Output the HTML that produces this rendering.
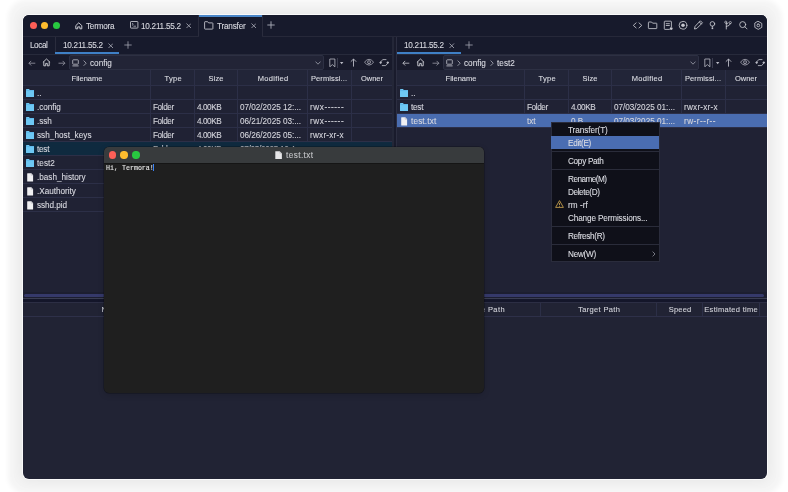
<!DOCTYPE html><html><head><meta charset="utf-8"><style>
html,body{margin:0;padding:0;}
body{width:788px;height:492px;background:#fff;position:relative;overflow:hidden;font-family:"Liberation Sans",sans-serif;}
.a{position:absolute;}
.t{position:absolute;white-space:pre;line-height:14px;height:14px;will-change:transform;-webkit-text-stroke:0.1px currentColor;}
</style></head><body>
<div class="a" style="left:23px;top:15px;width:744px;height:463.8px;border-radius:6px;background:#212334;box-shadow:0 0 0 0.7px #fff,0 0 5px 15px rgba(0,0,0,0.045),0 0 12px 2px rgba(0,0,0,0.06);"></div>
<div class="a" style="left:23px;top:15px;width:744px;height:463.8px;border-radius:6px;overflow:hidden;"><div class="a" style="left:-23px;top:-15px;width:788px;height:492px;">
<div class="a" style="left:23px;top:15px;width:744px;height:21px;background:#171a2c;"></div>
<div class="a" style="left:23px;top:36px;width:744px;height:1px;background:#262839;"></div>
<div class="a" style="left:29.75px;top:21.75px;width:7.2px;height:7.2px;border-radius:50%;background:#fe5f57;"></div>
<div class="a" style="left:41.15px;top:21.75px;width:7.2px;height:7.2px;border-radius:50%;background:#febc2e;"></div>
<div class="a" style="left:52.85px;top:21.75px;width:7.2px;height:7.2px;border-radius:50%;background:#28c840;"></div>
<svg class="a" style="left:74.6px;top:22px;" width="8" height="8" viewBox="0 0 8 8" fill="none"><path d="M0.8 3.6 L3.8 0.8 L6.8 3.6 V6.8 H4.9 V4.9 H2.7 V6.8 H0.8 Z" stroke="#c9cad2" stroke-width="1" stroke-linejoin="round"/></svg>
<div class="t" style="left:86px;top:20.1px;font-size:8.2px;color:#d8d9e0;letter-spacing:-0.245px;">Termora</div>
<svg class="a" style="left:129.6px;top:21.4px;" width="9" height="8" viewBox="0 0 9 8" fill="none"><rect x="0.5" y="0.5" width="7.4" height="6.6" rx="0.6" stroke="#c9cad2" stroke-width="0.85"/><path d="M2 2.2 L3.3 3.3 L2 4.4" stroke="#c9cad2" stroke-width="0.7"/><path d="M3.4 5.2 H6" stroke="#c9cad2" stroke-width="0.7"/></svg>
<div class="t" style="left:141px;top:20.1px;font-size:8.2px;color:#d8d9e0;letter-spacing:-0.259px;">10.211.55.2</div>
<svg class="a" style="left:185.8px;top:22.6px;" width="5.5" height="5.5" viewBox="0 0 5.5 5.5" fill="none"><path d="M0.5 0.5 L5.0 5.0 M5.0 0.5 L0.5 5.0" stroke="#aeb0bb" stroke-width="0.8"/></svg>
<div class="a" style="left:198px;top:15px;width:0.8px;height:21px;background:#2a2c3d;"></div>
<div class="a" style="left:198.8px;top:15px;width:63.4px;height:22px;background:#171a2c;"></div>
<div class="a" style="left:198.8px;top:15px;width:63.4px;height:1.6px;background:#4a86c8;"></div>
<div class="a" style="left:262.2px;top:15px;width:0.8px;height:21px;background:#2a2c3d;"></div>
<svg class="a" style="left:204.4px;top:21.2px;" width="10" height="9" viewBox="0 0 10 9" fill="none"><path d="M0.6 1.2 Q0.6 0.7 1.1 0.7 H3.6 L4.6 1.9 H8.4 Q8.9 1.9 8.9 2.4 V7.6 Q8.9 8.1 8.4 8.1 H1.1 Q0.6 8.1 0.6 7.6 Z" stroke="#c9cad2" stroke-width="0.85" stroke-linejoin="round"/></svg>
<div class="t" style="left:217px;top:20.1px;font-size:8.2px;color:#d8d9e0;letter-spacing:-0.207px;">Transfer</div>
<svg class="a" style="left:250.9px;top:22.6px;" width="5.5" height="5.5" viewBox="0 0 5.5 5.5" fill="none"><path d="M0.5 0.5 L5.0 5.0 M5.0 0.5 L0.5 5.0" stroke="#aeb0bb" stroke-width="0.8"/></svg>
<svg class="a" style="left:266.9px;top:20.9px;" width="8" height="8" viewBox="0 0 8 8" fill="none"><path d="M4 0.3 V7.7 M0.3 4 H7.7" stroke="#aeb0bb" stroke-width="0.9"/></svg>
<svg class="a" style="left:625px;top:15px" width="145" height="21" viewBox="625 15 145 21"><g stroke="#c6c7cf" stroke-width="0.85" fill="none" stroke-linecap="round" stroke-linejoin="round">
<path d="M636.1 22.9 L633.3 25.4 L636.1 27.9 M639 22.9 L641.8 25.4 L639 27.9"/>
<path d="M648.4 22.4 Q648.4 22 648.8 22 H651.6 L652.6 23.2 H656.4 Q656.8 23.2 656.8 23.6 V28.2 Q656.8 28.6 656.4 28.6 H648.8 Q648.4 28.6 648.4 28.2 Z"/>
<path d="M671.4 26.6 V21.8 Q671.4 21.2 670.8 21.2 H664.9 Q664.3 21.2 664.3 21.8 V28.8 Q664.3 29.4 664.9 29.4 H669.4"/>
<path d="M666.2 23.7 H669.4 M666.2 25.5 H669.4"/>
<circle cx="683" cy="25.3" r="3.9"/>
<g transform="translate(698.3 25.2) rotate(45)"><path d="M-1.25 -4.6 H1.25 V3.4 L0 5.4 L-1.25 3.4 Z M-1.25 -3 H1.25"/></g>
<circle cx="712.4" cy="23.9" r="2.3"/>
<path d="M712.4 26.2 V27.3"/>
<path d="M726.3 29 V22.6 M726.3 26.6 Q729.8 26 730.6 23.4 M726.3 23.8 Q727.6 24.6 728.2 23"/>
<circle cx="742.7" cy="24.6" r="3"/>
<path d="M744.9 26.8 L747 28.9"/>
<path d="M758.3 21.4 L761.8 23.4 V27.4 L758.3 29.4 L754.8 27.4 V23.4 Z"/>
<rect x="757" y="24.1" width="2.6" height="2.6" rx="1"/>
</g>
<circle cx="683" cy="25.3" r="1.75" fill="#c6c7cf"/>
<circle cx="671.2" cy="28.6" r="1.4" fill="#c6c7cf"/>
<rect x="711.6" y="27.6" width="1.6" height="1.5" fill="#c6c7cf"/>
<circle cx="725.8" cy="22.2" r="1.1" stroke="#c6c7cf" stroke-width="0.7" fill="none"/>
<circle cx="730.3" cy="22.6" r="1.1" stroke="#c6c7cf" stroke-width="0.7" fill="none"/>
</svg>
<div class="a" style="left:23px;top:37px;width:370px;height:17px;background:#171a2c;"></div>
<div class="a" style="left:23px;top:54px;width:370px;height:0.8px;background:#272a3b;"></div>
<div class="t" style="left:30px;top:39.2px;font-size:8.2px;color:#d8d9e0;letter-spacing:-0.439px;">Local</div>
<div class="a" style="left:55.3px;top:37px;width:0.8px;height:17px;background:#2a2c3d;"></div>
<div class="a" style="left:55.3px;top:52.3px;width:64px;height:1.7px;background:#3f80c6;"></div>
<div class="t" style="left:62.599999999999994px;top:39.2px;font-size:8.2px;color:#d8d9e0;letter-spacing:-0.259px;">10.211.55.2</div>
<svg class="a" style="left:107.5px;top:42.6px;" width="5.5" height="5.5" viewBox="0 0 5.5 5.5" fill="none"><path d="M0.5 0.5 L5.0 5.0 M5.0 0.5 L0.5 5.0" stroke="#aeb0bb" stroke-width="0.8"/></svg>
<svg class="a" style="left:123.6px;top:40.6px;" width="8" height="8" viewBox="0 0 8 8" fill="none"><path d="M4 0.3 V7.7 M0.3 4 H7.7" stroke="#a4a6b2" stroke-width="0.8"/></svg>
<div class="a" style="left:23px;top:55px;width:370px;height:15px;background:#181a2b;"></div>
<svg class="a" style="left:27.5px;top:59px;" width="8" height="8" viewBox="0 0 8 8" fill="none"><path d="M7.3 4.2 H0.9 M3.2 1.9 L0.9 4.2 L3.2 6.5" stroke="#9a9ca8" stroke-width="0.8"/></svg>
<svg class="a" style="left:42.3px;top:58.1px;" width="9" height="8.5" viewBox="0 0 9 8.5" fill="none"><path d="M0.9 4.4 L4.5 1 L8.1 4.4 M1.8 3.6 V7.8 H3.7 V5.4 H5.3 V7.8 H7.2 V3.6" stroke="#c9cad2" stroke-width="0.95" stroke-linejoin="round"/></svg>
<svg class="a" style="left:57.6px;top:59px;" width="8" height="8" viewBox="0 0 8 8" fill="none"><path d="M0.5 4.2 H6.9 M4.6 1.9 L6.9 4.2 L4.6 6.5" stroke="#9a9ca8" stroke-width="0.8"/></svg>
<div class="a" style="left:69.1px;top:54.9px;width:254.70000000000002px;height:15px;box-sizing:border-box;border:0.8px solid #2d3043;border-radius:2px;background:#222436;"></div>
<svg class="a" style="left:72.1px;top:58.8px;" width="8" height="8" viewBox="0 0 8 8" fill="none"><rect x="0.7" y="0.8" width="5.6" height="4.4" rx="0.6" stroke="#b9bac4" stroke-width="0.85"/><path d="M0.4 6.9 H6.6" stroke="#b9bac4" stroke-width="0.9"/></svg>
<svg class="a" style="left:82.6px;top:59.5px;" width="4" height="6.5" viewBox="0 0 4 6.5" fill="none"><path d="M0.6 0.6 L3.2 3.2 L0.6 5.8" stroke="#aeb0bb" stroke-width="0.8"/></svg>
<div class="t" style="left:89.8px;top:57.0px;font-size:8.2px;color:#dadbe2;letter-spacing:0.001px;">config</div>
<svg class="a" style="left:314.6px;top:60.8px;" width="6" height="4" viewBox="0 0 6 4" fill="none"><path d="M0.5 0.6 L3 3.2 L5.5 0.6" stroke="#9a9ca8" stroke-width="0.85"/></svg>
<svg class="a" style="left:328.6px;top:57.8px;" width="7" height="9" viewBox="0 0 7 9" fill="none"><path d="M0.8 1 H5.9 V8.8 L3.35 6.6 L0.8 8.8 Z" stroke="#b9bac4" stroke-width="0.8" stroke-linejoin="round"/></svg>
<div class="a" style="left:337.2px;top:57.5px;width:0.7px;height:10px;background:#3a3c4e;"></div>
<svg class="a" style="left:340.40000000000003px;top:61.6px;" width="4" height="3" viewBox="0 0 4 3" fill="none"><path d="M0 0 H3.4 L1.7 2.2 Z" fill="#b9bac4"/></svg>
<svg class="a" style="left:349.6px;top:57.8px;" width="7" height="9" viewBox="0 0 7 9" fill="none"><path d="M3.5 8.6 V1 M0.8 3.7 L3.5 1 L6.2 3.7" stroke="#b9bac4" stroke-width="0.9"/></svg>
<svg class="a" style="left:364.3px;top:58.3px;" width="10" height="9" viewBox="0 0 10 9" fill="none"><path d="M0.5 4.2 Q5.05 -1.6 9.6 4.2 Q5.05 10 0.5 4.2 Z" stroke="#b9bac4" stroke-width="0.75"/><circle cx="5.05" cy="4.2" r="1.5" stroke="#b9bac4" stroke-width="0.75"/><circle cx="5.05" cy="4.2" r="0.35" fill="#b9bac4"/></svg>
<svg class="a" style="left:379.3px;top:57.8px;" width="11" height="9" viewBox="0 0 11 9" fill="none"><path d="M7.4 1.6 H3.7 L1.7 4 M2.9 7.6 H6.7 L8.7 5.2" stroke="#b9bac4" stroke-width="0.85" stroke-linejoin="round"/><path d="M0.2 4.6 L1.6 3.2 L3.1 4.7 L1.6 6 Z M10.2 4.6 L8.8 3.2 L7.3 4.7 L8.8 6 Z" fill="#b9bac4"/></svg>
<div class="a" style="left:23px;top:70px;width:370px;height:15px;background:#222538;"></div>
<div class="t" style="left:-13.150000000000006px;width:200px;text-align:center;top:72.3px;font-size:7.5px;color:#dddee4;letter-spacing:0.004px;text-indent:0.004px;">Filename</div>
<div class="t" style="left:72.65px;width:200px;text-align:center;top:72.3px;font-size:7.5px;color:#dddee4;letter-spacing:0.304px;text-indent:0.304px;">Type</div>
<div class="t" style="left:116.1px;width:200px;text-align:center;top:72.3px;font-size:7.5px;color:#dddee4;letter-spacing:0.127px;text-indent:0.127px;">Size</div>
<div class="t" style="left:172.55px;width:200px;text-align:center;top:72.3px;font-size:7.5px;color:#dddee4;letter-spacing:0.289px;text-indent:0.289px;">Modified</div>
<div class="t" style="left:229.39999999999998px;width:200px;text-align:center;top:72.3px;font-size:7.5px;color:#dddee4;letter-spacing:0.108px;text-indent:0.108px;">Permissi...</div>
<div class="t" style="left:272.15px;width:200px;text-align:center;top:72.3px;font-size:7.5px;color:#dddee4;letter-spacing:-0.073px;text-indent:-0.073px;">Owner</div>
<div class="a" style="left:23px;top:85px;width:370px;height:208px;background:#202234;"></div>
<div class="a" style="left:23px;top:84.6px;width:370px;height:0.8px;background:#2c2f47;"></div>
<div class="a" style="left:23px;top:98.6px;width:370px;height:0.8px;background:#2c2f47;"></div>
<div class="a" style="left:23px;top:112.6px;width:370px;height:0.8px;background:#2c2f47;"></div>
<div class="a" style="left:23px;top:126.6px;width:370px;height:0.8px;background:#2c2f47;"></div>
<div class="a" style="left:23px;top:140.6px;width:370px;height:0.8px;background:#2c2f47;"></div>
<div class="a" style="left:23px;top:154.6px;width:370px;height:0.8px;background:#2c2f47;"></div>
<div class="a" style="left:23px;top:168.6px;width:370px;height:0.8px;background:#2c2f47;"></div>
<div class="a" style="left:23px;top:182.6px;width:370px;height:0.8px;background:#2c2f47;"></div>
<div class="a" style="left:23px;top:196.6px;width:370px;height:0.8px;background:#2c2f47;"></div>
<div class="a" style="left:23px;top:210.6px;width:370px;height:0.8px;background:#2c2f47;"></div>
<div class="a" style="left:150.29999999999998px;top:70px;width:0.8px;height:15px;background:#2c2f47;"></div>
<div class="a" style="left:150.29999999999998px;top:85px;width:0.8px;height:126px;background:#2c2f47;"></div>
<div class="a" style="left:194.2px;top:70px;width:0.8px;height:15px;background:#2c2f47;"></div>
<div class="a" style="left:194.2px;top:85px;width:0.8px;height:126px;background:#2c2f47;"></div>
<div class="a" style="left:237.2px;top:70px;width:0.8px;height:15px;background:#2c2f47;"></div>
<div class="a" style="left:237.2px;top:85px;width:0.8px;height:126px;background:#2c2f47;"></div>
<div class="a" style="left:307.1px;top:70px;width:0.8px;height:15px;background:#2c2f47;"></div>
<div class="a" style="left:307.1px;top:85px;width:0.8px;height:126px;background:#2c2f47;"></div>
<div class="a" style="left:350.90000000000003px;top:70px;width:0.8px;height:15px;background:#2c2f47;"></div>
<div class="a" style="left:350.90000000000003px;top:85px;width:0.8px;height:126px;background:#2c2f47;"></div>
<svg class="a" style="left:25.8px;top:88.9px;" width="8.4" height="8.2" viewBox="0 0 8.4 8.2" fill="none"><path d="M0 0.7 Q0 0 0.7 0 H3 L3.8 0.9 H7.8 Q8.4 0.9 8.4 1.5 V7.6 Q8.4 8.2 7.8 8.2 H0.6 Q0 8.2 0 7.6 Z" fill="#6ec8f4"/><path d="M0 1.6 H8.4" stroke="#52ade2" stroke-width="0.6"/></svg>
<div class="t" style="left:36.7px;top:86.7px;font-size:8.2px;color:#d8d9e0;letter-spacing:-0.043px;">..</div>
<svg class="a" style="left:25.8px;top:102.9px;" width="8.4" height="8.2" viewBox="0 0 8.4 8.2" fill="none"><path d="M0 0.7 Q0 0 0.7 0 H3 L3.8 0.9 H7.8 Q8.4 0.9 8.4 1.5 V7.6 Q8.4 8.2 7.8 8.2 H0.6 Q0 8.2 0 7.6 Z" fill="#6ec8f4"/><path d="M0 1.6 H8.4" stroke="#52ade2" stroke-width="0.6"/></svg>
<div class="t" style="left:36.7px;top:100.7px;font-size:8.2px;color:#d8d9e0;letter-spacing:-0.062px;">.config</div>
<div class="t" style="left:153.2px;top:100.7px;font-size:8.2px;color:#d4d5dc;letter-spacing:-0.396px;">Folder</div>
<div class="t" style="left:197.1px;top:100.7px;font-size:8.2px;color:#d4d5dc;letter-spacing:-0.439px;">4.00KB</div>
<div class="t" style="left:240.1px;top:100.7px;font-size:8.2px;color:#d4d5dc;letter-spacing:-0.030px;">07/02/2025 12:...</div>
<div class="t" style="left:310.0px;top:100.7px;font-size:8.2px;color:#d4d5dc;letter-spacing:0.567px;">rwx------</div>
<svg class="a" style="left:25.8px;top:116.9px;" width="8.4" height="8.2" viewBox="0 0 8.4 8.2" fill="none"><path d="M0 0.7 Q0 0 0.7 0 H3 L3.8 0.9 H7.8 Q8.4 0.9 8.4 1.5 V7.6 Q8.4 8.2 7.8 8.2 H0.6 Q0 8.2 0 7.6 Z" fill="#6ec8f4"/><path d="M0 1.6 H8.4" stroke="#52ade2" stroke-width="0.6"/></svg>
<div class="t" style="left:36.7px;top:114.7px;font-size:8.2px;color:#d8d9e0;letter-spacing:-0.052px;">.ssh</div>
<div class="t" style="left:153.2px;top:114.7px;font-size:8.2px;color:#d4d5dc;letter-spacing:-0.396px;">Folder</div>
<div class="t" style="left:197.1px;top:114.7px;font-size:8.2px;color:#d4d5dc;letter-spacing:-0.439px;">4.00KB</div>
<div class="t" style="left:240.1px;top:114.7px;font-size:8.2px;color:#d4d5dc;letter-spacing:-0.030px;">06/21/2025 03:...</div>
<div class="t" style="left:310.0px;top:114.7px;font-size:8.2px;color:#d4d5dc;letter-spacing:0.567px;">rwx------</div>
<svg class="a" style="left:25.8px;top:130.9px;" width="8.4" height="8.2" viewBox="0 0 8.4 8.2" fill="none"><path d="M0 0.7 Q0 0 0.7 0 H3 L3.8 0.9 H7.8 Q8.4 0.9 8.4 1.5 V7.6 Q8.4 8.2 7.8 8.2 H0.6 Q0 8.2 0 7.6 Z" fill="#6ec8f4"/><path d="M0 1.6 H8.4" stroke="#52ade2" stroke-width="0.6"/></svg>
<div class="t" style="left:36.7px;top:128.7px;font-size:8.2px;color:#d8d9e0;letter-spacing:0.028px;">ssh_host_keys</div>
<div class="t" style="left:153.2px;top:128.7px;font-size:8.2px;color:#d4d5dc;letter-spacing:-0.396px;">Folder</div>
<div class="t" style="left:197.1px;top:128.7px;font-size:8.2px;color:#d4d5dc;letter-spacing:-0.439px;">4.00KB</div>
<div class="t" style="left:240.1px;top:128.7px;font-size:8.2px;color:#d4d5dc;letter-spacing:-0.030px;">06/26/2025 05:...</div>
<div class="t" style="left:310.0px;top:128.7px;font-size:8.2px;color:#d4d5dc;letter-spacing:0.221px;">rwxr-xr-x</div>
<div class="a" style="left:23px;top:141.5px;width:370px;height:13.4px;background:#0f2a3f;"></div>
<svg class="a" style="left:25.8px;top:144.9px;" width="8.4" height="8.2" viewBox="0 0 8.4 8.2" fill="none"><path d="M0 0.7 Q0 0 0.7 0 H3 L3.8 0.9 H7.8 Q8.4 0.9 8.4 1.5 V7.6 Q8.4 8.2 7.8 8.2 H0.6 Q0 8.2 0 7.6 Z" fill="#6ec8f4"/><path d="M0 1.6 H8.4" stroke="#52ade2" stroke-width="0.6"/></svg>
<div class="t" style="left:36.7px;top:142.7px;font-size:8.2px;color:#d8d9e0;letter-spacing:-0.241px;">test</div>
<div class="t" style="left:153.2px;top:142.7px;font-size:8.2px;color:#d4d5dc;letter-spacing:-0.396px;">Folder</div>
<div class="t" style="left:197.1px;top:142.7px;font-size:8.2px;color:#d4d5dc;letter-spacing:-0.439px;">4.00KB</div>
<div class="t" style="left:240.1px;top:142.7px;font-size:8.2px;color:#d4d5dc;letter-spacing:-0.296px;">07/03/2025 12:4...</div>
<svg class="a" style="left:25.8px;top:158.9px;" width="8.4" height="8.2" viewBox="0 0 8.4 8.2" fill="none"><path d="M0 0.7 Q0 0 0.7 0 H3 L3.8 0.9 H7.8 Q8.4 0.9 8.4 1.5 V7.6 Q8.4 8.2 7.8 8.2 H0.6 Q0 8.2 0 7.6 Z" fill="#6ec8f4"/><path d="M0 1.6 H8.4" stroke="#52ade2" stroke-width="0.6"/></svg>
<div class="t" style="left:36.7px;top:156.7px;font-size:8.2px;color:#d8d9e0;letter-spacing:0.026px;">test2</div>
<svg class="a" style="left:26.5px;top:172.5px;" width="7" height="9" viewBox="0 0 7 9" fill="none"><path d="M0.2 0.7 Q0.2 0.2 0.7 0.2 H4 L6.1 2.3 V7.9 Q6.1 8.4 5.6 8.4 H0.7 Q0.2 8.4 0.2 7.9 Z" fill="#f0f0f2"/><path d="M4 0.2 V2.3 H6.1" stroke="#c0c0c6" stroke-width="0.5" fill="#d8d8dc"/></svg>
<div class="t" style="left:36.7px;top:170.7px;font-size:8.2px;color:#d8d9e0;letter-spacing:-0.009px;">.bash_history</div>
<svg class="a" style="left:26.5px;top:186.5px;" width="7" height="9" viewBox="0 0 7 9" fill="none"><path d="M0.2 0.7 Q0.2 0.2 0.7 0.2 H4 L6.1 2.3 V7.9 Q6.1 8.4 5.6 8.4 H0.7 Q0.2 8.4 0.2 7.9 Z" fill="#f0f0f2"/><path d="M4 0.2 V2.3 H6.1" stroke="#c0c0c6" stroke-width="0.5" fill="#d8d8dc"/></svg>
<div class="t" style="left:36.7px;top:184.7px;font-size:8.2px;color:#d8d9e0;letter-spacing:-0.024px;">.Xauthority</div>
<svg class="a" style="left:26.5px;top:200.5px;" width="7" height="9" viewBox="0 0 7 9" fill="none"><path d="M0.2 0.7 Q0.2 0.2 0.7 0.2 H4 L6.1 2.3 V7.9 Q6.1 8.4 5.6 8.4 H0.7 Q0.2 8.4 0.2 7.9 Z" fill="#f0f0f2"/><path d="M4 0.2 V2.3 H6.1" stroke="#c0c0c6" stroke-width="0.5" fill="#d8d8dc"/></svg>
<div class="t" style="left:36.7px;top:198.7px;font-size:8.2px;color:#d8d9e0;letter-spacing:-0.063px;">sshd.pid</div>
<div class="a" style="left:397px;top:37px;width:370px;height:17px;background:#171a2c;"></div>
<div class="a" style="left:397px;top:54px;width:370px;height:0.8px;background:#272a3b;"></div>
<div class="a" style="left:397px;top:52.3px;width:64px;height:1.7px;background:#3f80c6;"></div>
<div class="t" style="left:404.3px;top:39.2px;font-size:8.2px;color:#d8d9e0;letter-spacing:-0.259px;">10.211.55.2</div>
<svg class="a" style="left:449.2px;top:42.6px;" width="5.5" height="5.5" viewBox="0 0 5.5 5.5" fill="none"><path d="M0.5 0.5 L5.0 5.0 M5.0 0.5 L0.5 5.0" stroke="#aeb0bb" stroke-width="0.8"/></svg>
<svg class="a" style="left:465.3px;top:40.6px;" width="8" height="8" viewBox="0 0 8 8" fill="none"><path d="M4 0.3 V7.7 M0.3 4 H7.7" stroke="#a4a6b2" stroke-width="0.8"/></svg>
<div class="a" style="left:397px;top:55px;width:370px;height:15px;background:#181a2b;"></div>
<svg class="a" style="left:401.5px;top:59px;" width="8" height="8" viewBox="0 0 8 8" fill="none"><path d="M7.3 4.2 H0.9 M3.2 1.9 L0.9 4.2 L3.2 6.5" stroke="#c9cad2" stroke-width="0.8"/></svg>
<svg class="a" style="left:416.3px;top:58.1px;" width="9" height="8.5" viewBox="0 0 9 8.5" fill="none"><path d="M0.9 4.4 L4.5 1 L8.1 4.4 M1.8 3.6 V7.8 H3.7 V5.4 H5.3 V7.8 H7.2 V3.6" stroke="#c9cad2" stroke-width="0.95" stroke-linejoin="round"/></svg>
<svg class="a" style="left:431.6px;top:59px;" width="8" height="8" viewBox="0 0 8 8" fill="none"><path d="M0.5 4.2 H6.9 M4.6 1.9 L6.9 4.2 L4.6 6.5" stroke="#9a9ca8" stroke-width="0.8"/></svg>
<div class="a" style="left:443.1px;top:54.9px;width:255.89999999999998px;height:15px;box-sizing:border-box;border:0.8px solid #2d3043;border-radius:2px;background:#222436;"></div>
<svg class="a" style="left:446.1px;top:58.8px;" width="8" height="8" viewBox="0 0 8 8" fill="none"><rect x="0.7" y="0.8" width="5.6" height="4.4" rx="0.6" stroke="#b9bac4" stroke-width="0.85"/><path d="M0.4 6.9 H6.6" stroke="#b9bac4" stroke-width="0.9"/></svg>
<svg class="a" style="left:456.6px;top:59.5px;" width="4" height="6.5" viewBox="0 0 4 6.5" fill="none"><path d="M0.6 0.6 L3.2 3.2 L0.6 5.8" stroke="#aeb0bb" stroke-width="0.8"/></svg>
<div class="t" style="left:463.8px;top:57.0px;font-size:8.2px;color:#dadbe2;letter-spacing:0.001px;">config</div>
<svg class="a" style="left:489.90000000000003px;top:59.5px;" width="4" height="6.5" viewBox="0 0 4 6.5" fill="none"><path d="M0.6 0.6 L3.2 3.2 L0.6 5.8" stroke="#aeb0bb" stroke-width="0.8"/></svg>
<div class="t" style="left:497.1px;top:57.0px;font-size:8.2px;color:#dadbe2;letter-spacing:0.026px;">test2</div>
<svg class="a" style="left:689.8px;top:60.8px;" width="6" height="4" viewBox="0 0 6 4" fill="none"><path d="M0.5 0.6 L3 3.2 L5.5 0.6" stroke="#9a9ca8" stroke-width="0.85"/></svg>
<svg class="a" style="left:703.8px;top:57.8px;" width="7" height="9" viewBox="0 0 7 9" fill="none"><path d="M0.8 1 H5.9 V8.8 L3.35 6.6 L0.8 8.8 Z" stroke="#b9bac4" stroke-width="0.8" stroke-linejoin="round"/></svg>
<div class="a" style="left:712.4px;top:57.5px;width:0.7px;height:10px;background:#3a3c4e;"></div>
<svg class="a" style="left:715.6px;top:61.6px;" width="4" height="3" viewBox="0 0 4 3" fill="none"><path d="M0 0 H3.4 L1.7 2.2 Z" fill="#b9bac4"/></svg>
<svg class="a" style="left:724.8px;top:57.8px;" width="7" height="9" viewBox="0 0 7 9" fill="none"><path d="M3.5 8.6 V1 M0.8 3.7 L3.5 1 L6.2 3.7" stroke="#b9bac4" stroke-width="0.9"/></svg>
<svg class="a" style="left:739.5px;top:58.3px;" width="10" height="9" viewBox="0 0 10 9" fill="none"><path d="M0.5 4.2 Q5.05 -1.6 9.6 4.2 Q5.05 10 0.5 4.2 Z" stroke="#b9bac4" stroke-width="0.75"/><circle cx="5.05" cy="4.2" r="1.5" stroke="#b9bac4" stroke-width="0.75"/><circle cx="5.05" cy="4.2" r="0.35" fill="#b9bac4"/></svg>
<svg class="a" style="left:754.5px;top:57.8px;" width="11" height="9" viewBox="0 0 11 9" fill="none"><path d="M7.4 1.6 H3.7 L1.7 4 M2.9 7.6 H6.7 L8.7 5.2" stroke="#b9bac4" stroke-width="0.85" stroke-linejoin="round"/><path d="M0.2 4.6 L1.6 3.2 L3.1 4.7 L1.6 6 Z M10.2 4.6 L8.8 3.2 L7.3 4.7 L8.8 6 Z" fill="#b9bac4"/></svg>
<div class="a" style="left:397px;top:70px;width:370px;height:15px;background:#222538;"></div>
<div class="t" style="left:360.85px;width:200px;text-align:center;top:72.3px;font-size:7.5px;color:#dddee4;letter-spacing:0.004px;text-indent:0.004px;">Filename</div>
<div class="t" style="left:446.65px;width:200px;text-align:center;top:72.3px;font-size:7.5px;color:#dddee4;letter-spacing:0.304px;text-indent:0.304px;">Type</div>
<div class="t" style="left:490.1px;width:200px;text-align:center;top:72.3px;font-size:7.5px;color:#dddee4;letter-spacing:0.127px;text-indent:0.127px;">Size</div>
<div class="t" style="left:546.55px;width:200px;text-align:center;top:72.3px;font-size:7.5px;color:#dddee4;letter-spacing:0.289px;text-indent:0.289px;">Modified</div>
<div class="t" style="left:603.4px;width:200px;text-align:center;top:72.3px;font-size:7.5px;color:#dddee4;letter-spacing:0.108px;text-indent:0.108px;">Permissi...</div>
<div class="t" style="left:646.15px;width:200px;text-align:center;top:72.3px;font-size:7.5px;color:#dddee4;letter-spacing:-0.073px;text-indent:-0.073px;">Owner</div>
<div class="a" style="left:397px;top:85px;width:370px;height:208px;background:#202234;"></div>
<div class="a" style="left:397px;top:84.6px;width:370px;height:0.8px;background:#2c2f47;"></div>
<div class="a" style="left:397px;top:98.6px;width:370px;height:0.8px;background:#2c2f47;"></div>
<div class="a" style="left:397px;top:112.6px;width:370px;height:0.8px;background:#2c2f47;"></div>
<div class="a" style="left:397px;top:126.6px;width:370px;height:0.8px;background:#2c2f47;"></div>
<div class="a" style="left:524.3000000000001px;top:70px;width:0.8px;height:15px;background:#2c2f47;"></div>
<div class="a" style="left:524.3000000000001px;top:85px;width:0.8px;height:42px;background:#2c2f47;"></div>
<div class="a" style="left:568.2px;top:70px;width:0.8px;height:15px;background:#2c2f47;"></div>
<div class="a" style="left:568.2px;top:85px;width:0.8px;height:42px;background:#2c2f47;"></div>
<div class="a" style="left:611.2px;top:70px;width:0.8px;height:15px;background:#2c2f47;"></div>
<div class="a" style="left:611.2px;top:85px;width:0.8px;height:42px;background:#2c2f47;"></div>
<div class="a" style="left:681.1px;top:70px;width:0.8px;height:15px;background:#2c2f47;"></div>
<div class="a" style="left:681.1px;top:85px;width:0.8px;height:42px;background:#2c2f47;"></div>
<div class="a" style="left:724.9px;top:70px;width:0.8px;height:15px;background:#2c2f47;"></div>
<div class="a" style="left:724.9px;top:85px;width:0.8px;height:42px;background:#2c2f47;"></div>
<svg class="a" style="left:399.8px;top:88.9px;" width="8.4" height="8.2" viewBox="0 0 8.4 8.2" fill="none"><path d="M0 0.7 Q0 0 0.7 0 H3 L3.8 0.9 H7.8 Q8.4 0.9 8.4 1.5 V7.6 Q8.4 8.2 7.8 8.2 H0.6 Q0 8.2 0 7.6 Z" fill="#6ec8f4"/><path d="M0 1.6 H8.4" stroke="#52ade2" stroke-width="0.6"/></svg>
<div class="t" style="left:410.7px;top:86.7px;font-size:8.2px;color:#d8d9e0;letter-spacing:-0.043px;">..</div>
<svg class="a" style="left:399.8px;top:102.9px;" width="8.4" height="8.2" viewBox="0 0 8.4 8.2" fill="none"><path d="M0 0.7 Q0 0 0.7 0 H3 L3.8 0.9 H7.8 Q8.4 0.9 8.4 1.5 V7.6 Q8.4 8.2 7.8 8.2 H0.6 Q0 8.2 0 7.6 Z" fill="#6ec8f4"/><path d="M0 1.6 H8.4" stroke="#52ade2" stroke-width="0.6"/></svg>
<div class="t" style="left:410.7px;top:100.7px;font-size:8.2px;color:#d8d9e0;letter-spacing:-0.241px;">test</div>
<div class="t" style="left:527.2px;top:100.7px;font-size:8.2px;color:#d4d5dc;letter-spacing:-0.396px;">Folder</div>
<div class="t" style="left:571.1px;top:100.7px;font-size:8.2px;color:#d4d5dc;letter-spacing:-0.439px;">4.00KB</div>
<div class="t" style="left:614.1px;top:100.7px;font-size:8.2px;color:#d4d5dc;letter-spacing:-0.030px;">07/03/2025 01:...</div>
<div class="t" style="left:684.0px;top:100.7px;font-size:8.2px;color:#d4d5dc;letter-spacing:0.221px;">rwxr-xr-x</div>
<div class="a" style="left:397px;top:113.5px;width:370px;height:13.4px;background:#4a6db0;"></div>
<svg class="a" style="left:400.5px;top:116.5px;" width="7" height="9" viewBox="0 0 7 9" fill="none"><path d="M0.2 0.7 Q0.2 0.2 0.7 0.2 H4 L6.1 2.3 V7.9 Q6.1 8.4 5.6 8.4 H0.7 Q0.2 8.4 0.2 7.9 Z" fill="#f0f0f2"/><path d="M4 0.2 V2.3 H6.1" stroke="#c0c0c6" stroke-width="0.5" fill="#d8d8dc"/></svg>
<div class="t" style="left:410.7px;top:114.7px;font-size:8.2px;color:#d8d9e0;letter-spacing:0.151px;">test.txt</div>
<div class="t" style="left:527.2px;top:114.7px;font-size:8.2px;color:#d4d5dc;letter-spacing:-0.047px;">txt</div>
<div class="t" style="left:571.1px;top:114.7px;font-size:8.2px;color:#d4d5dc;letter-spacing:-0.064px;">0 B</div>
<div class="t" style="left:614.1px;top:114.7px;font-size:8.2px;color:#d4d5dc;letter-spacing:-0.030px;">07/03/2025 01:...</div>
<div class="t" style="left:684.0px;top:114.7px;font-size:8.2px;color:#d4d5dc;letter-spacing:0.475px;">rw-r--r--</div>
<div class="a" style="left:392.3px;top:37px;width:2px;height:256px;background:#242738;"></div>
<div class="a" style="left:394.3px;top:37px;width:2.2px;height:256px;background:#191b2c;"></div>
<div class="a" style="left:396.2px;top:37px;width:0.8px;height:256px;background:#2c2e41;"></div>
<div class="a" style="left:23px;top:292px;width:744px;height:5.8px;background:#1c1e30;"></div>
<div class="a" style="left:23px;top:298.8px;width:744px;height:3.3px;background:#14162a;"></div>
<div class="a" style="left:24.2px;top:293.8px;width:740px;height:3.2px;border-radius:1.6px;background:#35396a;"></div>
<div class="a" style="left:23px;top:297.8px;width:744px;height:1.0px;background:#3a3d52;"></div>
<div class="a" style="left:23px;top:302.1px;width:744px;height:0.9px;background:#2c2e44;"></div>
<div class="a" style="left:23px;top:303px;width:744px;height:13.4px;background:#212334;"></div>
<div class="a" style="left:23px;top:316.2px;width:744px;height:0.8px;background:#2e3049;"></div>
<div class="t" style="left:10.5px;width:200px;text-align:center;top:303.1px;font-size:7.5px;color:#d2d3da;letter-spacing:-0.397px;text-indent:-0.397px;">Name</div>
<div class="t" style="left:382.4px;width:200px;text-align:center;top:303.1px;font-size:7.5px;color:#d2d3da;letter-spacing:0.390px;text-indent:0.390px;">Source Path</div>
<div class="t" style="left:498.5px;width:200px;text-align:center;top:303.1px;font-size:7.5px;color:#d2d3da;letter-spacing:0.331px;text-indent:0.331px;">Target Path</div>
<div class="t" style="left:579.8px;width:200px;text-align:center;top:303.1px;font-size:7.5px;color:#d2d3da;letter-spacing:0.146px;text-indent:0.146px;">Speed</div>
<div class="t" style="left:631.3px;width:200px;text-align:center;top:303.1px;font-size:7.5px;color:#d2d3da;letter-spacing:0.290px;text-indent:0.290px;">Estimated time</div>
<div class="a" style="left:299.6px;top:303px;width:0.8px;height:13.4px;background:#2c2f47;"></div>
<div class="a" style="left:540.0px;top:303px;width:0.8px;height:13.4px;background:#2c2f47;"></div>
<div class="a" style="left:656.1px;top:303px;width:0.8px;height:13.4px;background:#2c2f47;"></div>
<div class="a" style="left:702.1px;top:303px;width:0.8px;height:13.4px;background:#2c2f47;"></div>
<div class="a" style="left:759.4px;top:303px;width:0.8px;height:13.4px;background:#2c2f47;"></div>
</div></div>
<div class="a" style="left:104px;top:147.2px;width:380px;height:245.4px;border-radius:5px;overflow:hidden;background:#1f1f1f;box-shadow:0 0 0 0.5px rgba(0,0,0,0.4),0 2px 6px rgba(0,0,0,0.15);">
<div class="a" style="left:0;top:0;width:380px;height:15.8px;background:#383b3d;border-bottom:0.6px solid #151515;"></div>
<div class="a" style="left:4.6000000000000005px;top:4.3px;width:7.4px;height:7.4px;border-radius:50%;background:#fe5f57;"></div>
<div class="a" style="left:16.400000000000002px;top:4.3px;width:7.4px;height:7.4px;border-radius:50%;background:#febc2e;"></div>
<div class="a" style="left:28.2px;top:4.3px;width:7.4px;height:7.4px;border-radius:50%;background:#28c840;"></div>
</div>
<svg class="a" style="left:274.8px;top:151px;" width="7.2" height="8.4" viewBox="0 0 7.2 8.4" fill="none"><path d="M0.3 0.3 H4.6 L6.9 2.6 V8.1 H0.3 Z" fill="#e6e6e8"/><path d="M4.6 0.3 V2.6 H6.9" fill="#bdbdc0"/></svg>
<div class="t" style="left:285.5px;top:148.9px;font-size:8.2px;color:#c4c5c8;letter-spacing:0.423px;">test.txt</div>
<div class="t" style="left:106.4px;top:161.1px;font-size:6.65px;color:#e8e8e8;letter-spacing:0.000px;font-family:'Liberation Mono',monospace;">Hi, Termora!</div>
<div class="a" style="left:153.3px;top:164.4px;width:1.1px;height:6.3px;background:#3b82f6;"></div>
<div class="a" style="left:551px;top:121.6px;width:108.6px;height:140px;box-sizing:border-box;background:#0f1019;border:0.8px solid #2a2c3c;"></div>
<div class="t" style="left:568px;top:124.4px;font-size:8.2px;color:#dcdde3;letter-spacing:-0.081px;">Transfer(T)</div>
<div class="a" style="left:551.4px;top:136.2px;width:107.8px;height:13.1px;background:#4a6db2;"></div>
<div class="t" style="left:568px;top:137.3px;font-size:8.2px;color:#dcdde3;letter-spacing:-0.283px;">Edit(E)</div>
<div class="a" style="left:551.8px;top:150.9px;width:107px;height:0.8px;background:#2a2c3a;"></div>
<div class="t" style="left:568px;top:154.9px;font-size:8.2px;color:#dcdde3;letter-spacing:-0.297px;">Copy Path</div>
<div class="a" style="left:551.8px;top:168.79999999999998px;width:107px;height:0.8px;background:#2a2c3a;"></div>
<div class="t" style="left:568px;top:173.4px;font-size:8.2px;color:#dcdde3;letter-spacing:-0.524px;">Rename(M)</div>
<div class="t" style="left:568px;top:186.0px;font-size:8.2px;color:#dcdde3;letter-spacing:-0.388px;">Delete(D)</div>
<div class="t" style="left:568px;top:199.1px;font-size:8.2px;color:#dcdde3;letter-spacing:0.025px;">rm -rf</div>
<div class="t" style="left:568px;top:211.6px;font-size:8.2px;color:#dcdde3;letter-spacing:-0.145px;">Change Permissions...</div>
<div class="a" style="left:551.8px;top:226.0px;width:107px;height:0.8px;background:#2a2c3a;"></div>
<div class="t" style="left:568px;top:229.7px;font-size:8.2px;color:#dcdde3;letter-spacing:-0.345px;">Refresh(R)</div>
<div class="a" style="left:551.8px;top:244.1px;width:107px;height:0.8px;background:#2a2c3a;"></div>
<div class="t" style="left:568px;top:247.7px;font-size:8.2px;color:#dcdde3;letter-spacing:-0.287px;">New(W)</div>
<svg class="a" style="left:555.2px;top:200.1px;" width="9" height="8" viewBox="0 0 9 8" fill="none"><path d="M4.5 0.6 L8.4 7.4 H0.6 Z" stroke="#c29c4c" stroke-width="0.9" stroke-linejoin="round"/><path d="M4.5 2.9 V5.1" stroke="#c29c4c" stroke-width="0.9"/><circle cx="4.5" cy="6.2" r="0.5" fill="#c29c4c"/></svg>
<svg class="a" style="left:652.3px;top:250.6px;" width="4" height="6" viewBox="0 0 4 6" fill="none"><path d="M0.6 0.6 L3 3 L0.6 5.4" stroke="#8e909c" stroke-width="0.8"/></svg>
</body></html>
